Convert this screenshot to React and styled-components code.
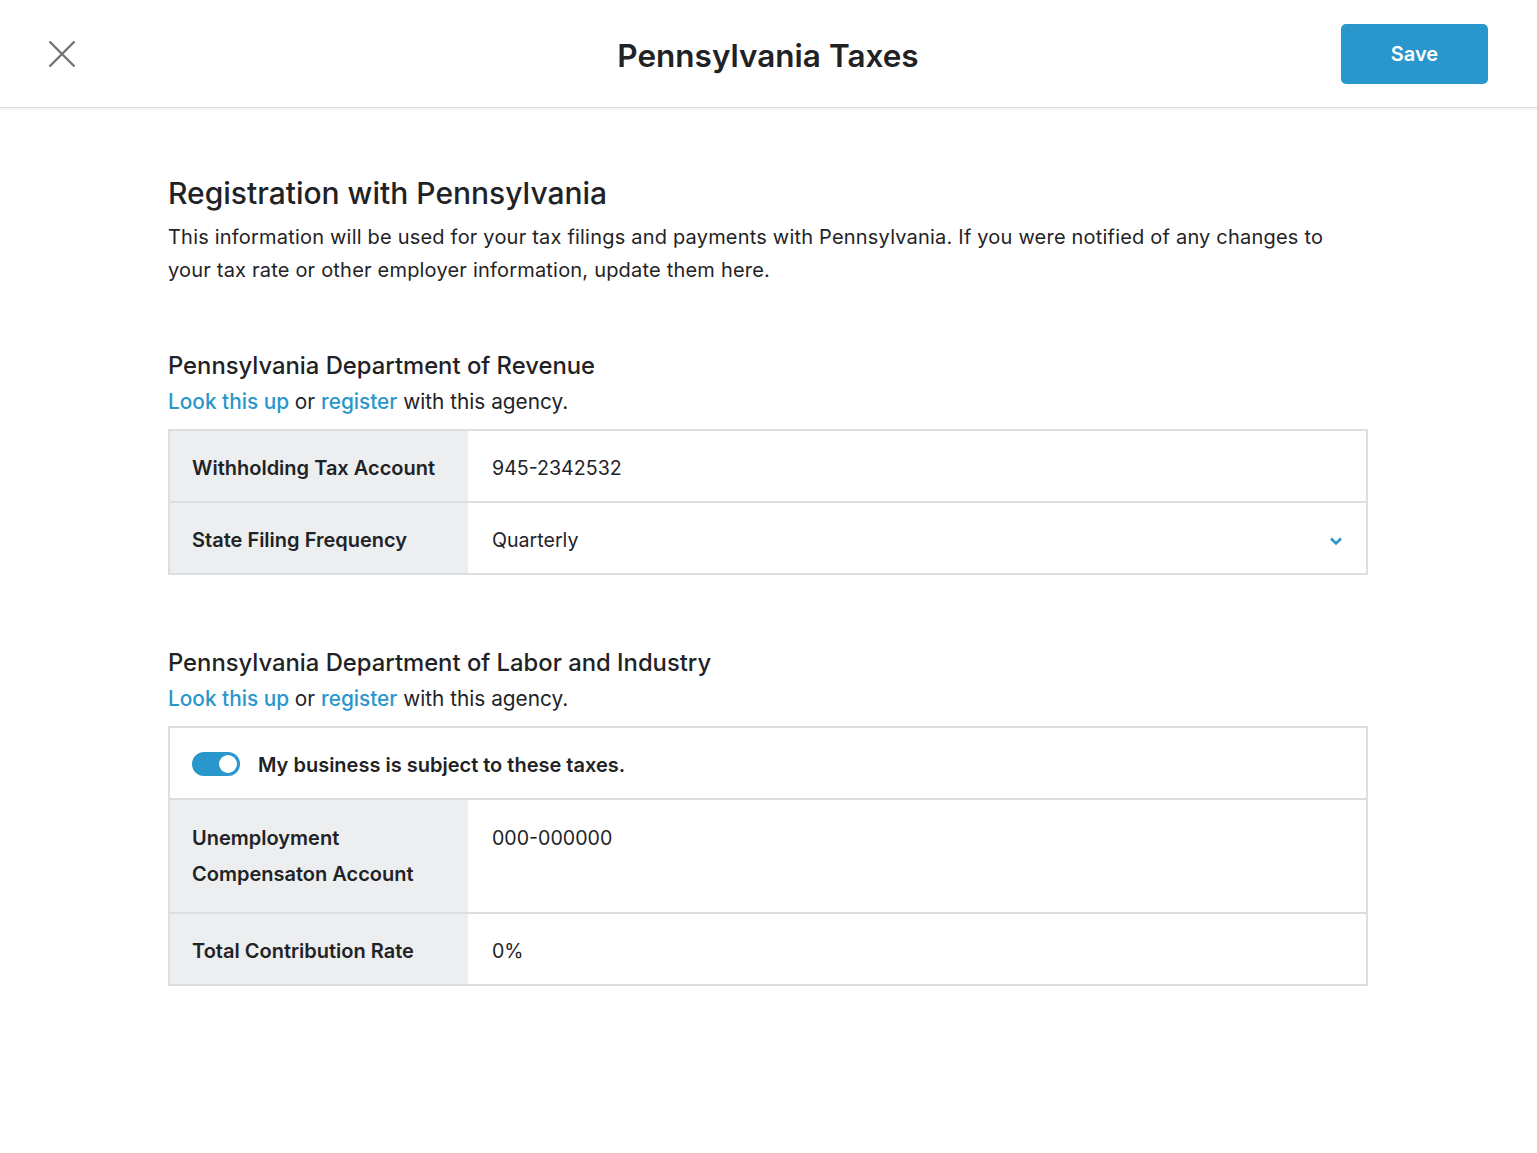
import React from "react";
import styled, { createGlobalStyle } from "styled-components";

const Global = createGlobalStyle`
  html, body { margin: 0; padding: 0; background: #fff; }
  body { font-family: "Inter", "Lato", sans-serif; color: #1f2326; -webkit-font-smoothing: antialiased; }
  * { box-sizing: border-box; }
`;

const Header = styled.header`
  height: 108px;
  display: grid;
  grid-template-columns: 1fr auto 1fr;
  align-items: center;
  padding: 2px 49px 0 48px;
  border-bottom: 1px solid #d9dcdf;
  box-shadow: 0 1px 2px rgba(0,0,0,0.08);
`;

const CloseButton = styled.button`
  justify-self: start;
  width: 28px;
  height: 28px;
  padding: 0;
  border: none;
  background: none;
  display: flex;
  align-items: center;
  justify-content: center;
  margin-top: -1px;
  cursor: pointer;
`;

const Title = styled.h1`
  margin: 2px 0 0;
  font-size: 31.5px;
  font-weight: 600;
  color: #1f2326;
  text-align: center;
`;

const SaveButton = styled.button`
  justify-self: end;
  width: 147px;
  height: 60px;
  border: none;
  border-radius: 5px;
  background: #2996cc;
  color: #fff;
  font-family: inherit;
  font-size: 20px;
  font-weight: 600;
  margin-top: -2px;
`;

const Main = styled.main`
  width: 1200px;
  margin: 0 169px 0 168px;
  padding: 65px 0 80px;
`;

const H2 = styled.h2`
  margin: 0 0 8px;
  font-size: 30px;
  font-weight: 500;
  line-height: 40px;
`;

const Intro = styled.p`
  margin: 0;
  font-size: 20px;
  letter-spacing: 0.2px;
  line-height: 33px;
`;

const Section = styled.section`
  margin-top: ${(p) => p.$top}px;
`;

const H3 = styled.h3`
  margin: 0;
  font-size: 23.8px;
  font-weight: 500;
  line-height: 32px;
`;

const Sub = styled.p`
  margin: 5px 0 12px;
  font-size: 20.8px;
  line-height: 30px;
`;

const Link = styled.a`
  color: #2996cc;
  text-decoration: none;
  font-weight: 500;
`;

const Table = styled.div`
  border: 2px solid #dcdfe2;
  display: flex;
  flex-direction: column;
`;

const Row = styled.div`
  box-sizing: content-box;
  display: grid;
  grid-template-columns: 298px 1fr;
  min-height: ${(p) => p.$h || 70}px;
  & + & { border-top: 2px solid #dcdfe2; }
`;

const Label = styled.div`
  background: #eceef0;
  padding: ${(p) => (p.$top ? "20px 22px" : "3px 22px 0")};
  display: flex;
  align-items: ${(p) => (p.$top ? "flex-start" : "center")};
  font-size: 20px;
  font-weight: 600;
  line-height: 36px;
`;

const Value = styled.div`
  padding: ${(p) => (p.$top ? "20px 24px" : "3px 24px 0")};
  display: flex;
  align-items: ${(p) => (p.$top ? "flex-start" : "center")};
  justify-content: space-between;
  font-size: 19.6px;
  line-height: 36px;
`;

const ToggleRow = styled.div`
  box-sizing: content-box;
  height: 70px;
  display: flex;
  align-items: center;
  gap: 18px;
  padding: 0 22px;
  border-bottom: 2px solid #dcdfe2;
  font-size: 20px;
  font-weight: 600;
`;

const ToggleText = styled.span`
  padding-top: 3px;
`;

const Toggle = styled.span`
  width: 48px;
  height: 24px;
  margin-top: 2px;
  border-radius: 12px;
  background: #2996cc;
  position: relative;
  flex: none;
  &::after {
    content: "";
    position: absolute;
    right: 3px;
    top: 3px;
    width: 18px;
    height: 18px;
    border-radius: 50%;
    background: #fff;
  }
`;

const Chevron = () => (
  <svg width="14" height="10" viewBox="0 0 14 10" style={{ marginRight: -1, marginTop: 2 }}>
    <path d="M2 2.5 L7 7.5 L12 2.5" fill="none" stroke="#2996cc" strokeWidth="2.6" />
  </svg>
);

export default function App() {
  return (
    <>
      <Global />
      <Header>
        <CloseButton aria-label="Close">
          <svg width="28" height="28" viewBox="0 0 28 28">
            <path d="M1.5 1.5 L26.5 26.5 M26.5 1.5 L1.5 26.5" stroke="#6f757b" strokeWidth="2.4" />
          </svg>
        </CloseButton>
        <Title>Pennsylvania Taxes</Title>
        <SaveButton>Save</SaveButton>
      </Header>
      <Main>
        <H2>Registration with Pennsylvania</H2>
        <Intro>
          This information will be used for your tax filings and payments with Pennsylvania. If you were notified of any changes to your tax rate or other employer information, update them here.
        </Intro>

        <Section $top={63}>
          <H3>Pennsylvania Department of Revenue</H3>
          <Sub>
            <Link href="#">Look this up</Link> or <Link href="#">register</Link> with this agency.
          </Sub>
          <Table>
            <Row>
              <Label>Withholding Tax Account</Label>
              <Value>945-2342532</Value>
            </Row>
            <Row>
              <Label>State Filing Frequency</Label>
              <Value>
                Quarterly
                <Chevron />
              </Value>
            </Row>
          </Table>
        </Section>

        <Section $top={72}>
          <H3>Pennsylvania Department of Labor and Industry</H3>
          <Sub>
            <Link href="#">Look this up</Link> or <Link href="#">register</Link> with this agency.
          </Sub>
          <Table>
            <ToggleRow>
              <Toggle />
              <ToggleText>My business is subject to these taxes.</ToggleText>
            </ToggleRow>
            <Row $h={111}>
              <Label $top>Unemployment<br />Compensaton Account</Label>
              <Value $top>000-000000</Value>
            </Row>
            <Row>
              <Label>Total Contribution Rate</Label>
              <Value>0%</Value>
            </Row>
          </Table>
        </Section>
      </Main>
    </>
  );
}
